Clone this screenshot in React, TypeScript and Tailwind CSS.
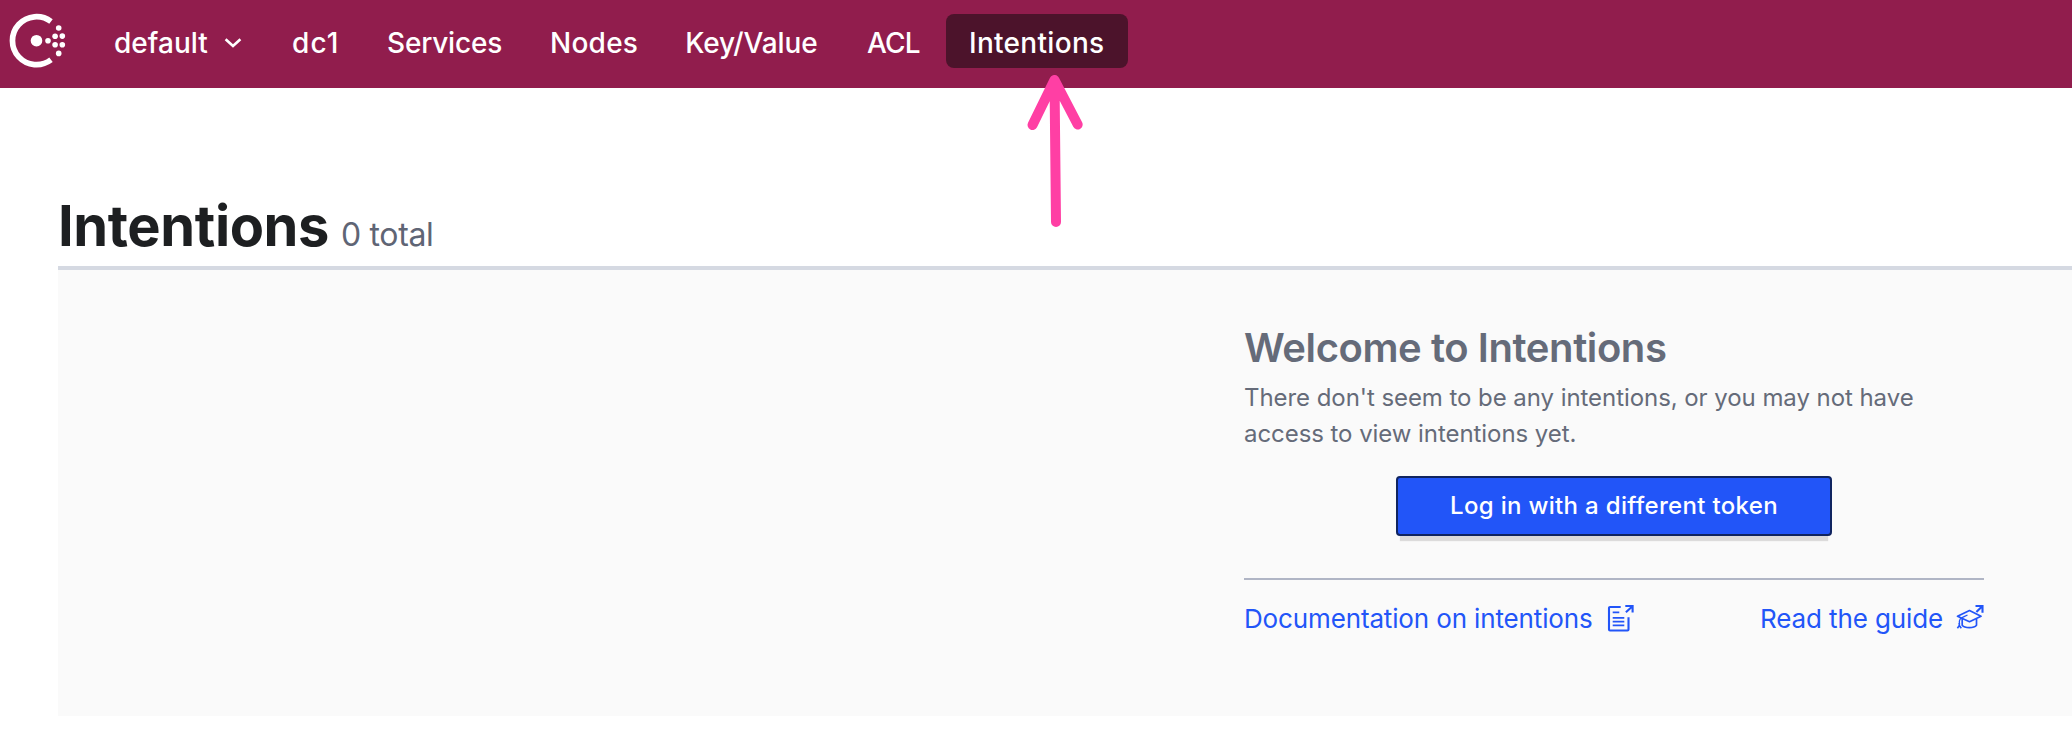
import type { ReactNode } from 'react';

function ConsulLogo() {
  const dots: [number, number][] = [
    [48, 40.7],
    [55.1, 36.3],
    [62.3, 36.1],
    [55.1, 44.8],
    [62.3, 44.8],
    [58.7, 28],
    [58.7, 53.4],
  ];
  return (
    <svg className="h-[88px] w-[70px] shrink-0" viewBox="0 0 70 88" fill="none">
      <path d="M51 21.6A24 24 0 1 0 51 59.8" stroke="#fff" strokeWidth="5.7" />
      <circle cx="36.5" cy="40.7" r="5.8" fill="#fff" />
      {dots.map(([cx, cy]) => (
        <circle key={`${cx}-${cy}`} cx={cx} cy={cy} r="2.8" fill="#fff" />
      ))}
    </svg>
  );
}

function NavItem({ className, children }: { className: string; children: ReactNode }) {
  return (
    <li className={`h-[54px] shrink-0 whitespace-nowrap leading-[58px] ${className}`}>
      <a>{children}</a>
    </li>
  );
}

function DocsIcon() {
  return (
    <svg className="h-7 w-7" viewBox="0 0 28 28" fill="none" stroke="currentColor" strokeWidth="2.1">
      <path d="M14.7 3H4a1 1 0 0 0-1 1v21.5a1 1 0 0 0 1 1h17.5a1 1 0 0 0 1-1V13.3" />
      <path d="M6.7 8.4h6.6M6.7 13.9h11.6M6.7 17.7h11.6M6.7 21.4h11.6" strokeWidth="1.7" />
      <path d="M19.3 2h7.3v6.6M26.2 2.4l-6.3 5.8" />
    </svg>
  );
}

function GuideIcon() {
  return (
    <svg
      className="h-7 w-7"
      viewBox="0 0 28 28"
      fill="none"
      stroke="currentColor"
      strokeWidth="1.7"
      strokeLinejoin="round"
    >
      <path d="M1.5 12.3L13.5 6.6L25 12.3L13.5 17.7Z" />
      <path d="M11.5 11L6.5 13.4C4.4 14.3 3.6 15.2 3.4 17V20" strokeWidth="1.3" />
      <path d="M6.2 15v6.3c2.5 3.2 11.7 3.2 14.3 0V15" />
      <path d="M3.3 19v2.5L1.4 24.2M3.3 21.5l2 2.7" strokeWidth="1.6" />
      <path d="M19.5 2h7v6.8M26.2 2.3l-5.8 5.6" strokeWidth="2.1" strokeLinejoin="miter" />
    </svg>
  );
}

export default function App() {
  return (
    <div className="relative h-[736px] w-[2072px] overflow-hidden bg-white font-['Inter',sans-serif]">
      <header className="flex h-[88px] bg-[#911d4d]">
        <ConsulLogo />
        <ul className="flex pt-[14px] text-[28px] font-[550] text-white">
          <NavItem className="ml-[44px] w-[178px] tracking-[0.03px]">
            <span className="flex">
              <span className="w-[109px]">default</span>
              <svg className="mt-[21px] h-5 w-5" viewBox="0 0 20 20" fill="none">
                <path d="M2.6 4.3L10 11L17.4 4.3" stroke="#fff" strokeWidth="2.6" />
              </svg>
            </span>
          </NavItem>
          <NavItem className="w-[95px] tracking-[1.1px]">dc1</NavItem>
          <NavItem className="w-[163px] tracking-[-0.2px]">Services</NavItem>
          <NavItem className="w-[135.2px] tracking-[0.25px]">Nodes</NavItem>
          <NavItem className="w-[181.8px] tracking-[-0.15px]">Key/Value</NavItem>
          <NavItem className="w-[79px] tracking-[-0.85px]">ACL</NavItem>
          <NavItem className="w-[182px] rounded-lg bg-[#4c132b] pl-[23px] tracking-[0.3px]">
            Intentions
          </NavItem>
        </ul>
      </header>

      <main className="pl-[58px]">
        <div className="flex h-[182px] items-baseline border-b-4 border-[#d5d9e2] pt-[106px]">
          <h1 className="text-[56px] leading-[64px] font-bold tracking-[-0.4px] text-[#1d1f21]">
            Intentions
          </h1>
          <em className="ml-[12px] text-[32px] leading-[40px] tracking-[-0.35px] text-[#5f6575] not-italic">
            0 total
          </em>
        </div>

        <div className="h-[446px] bg-[#fafafa] pt-[54px] pl-[1186px]">
          <section className="w-[740px] text-[#656b79]">
            <h2 className="text-[40px] leading-[48px] font-semibold tracking-[-0.42px]">
              Welcome to Intentions
            </h2>
            <p className="mt-[8px] w-[700px] text-[24px] leading-[36px] tracking-[-0.06px]">
              There don't seem to be any intentions, or you may not have access to view intentions yet.
            </p>
            <button className="mt-[24px] ml-[152px] block h-[60px] w-[436px] rounded-[4px] border-2 border-[#10245f] bg-[#2255f8] text-[24px] leading-[56px] font-[550] tracking-[0.32px] text-white shadow-[0_9px_1px_-4px_#dcdbdb]">
              Log in with a different token
            </button>
            <div className="mt-[42px] flex justify-between border-t-2 border-[#b0b5c5] pt-[22px] text-[26px] text-[#2255f8]">
              <a className="flex h-8 items-center">
                <span className="w-[362px] pt-[2px] leading-8 tracking-[-0.14px]">Documentation on intentions</span>
                <DocsIcon />
              </a>
              <a className="flex h-8 items-center">
                <span className="w-[196px] pt-[2px] leading-8 tracking-[-0.114px]">Read the guide</span>
                <GuideIcon />
              </a>
            </div>
          </section>
        </div>
      </main>

      <svg
        className="absolute top-[70px] left-[1020px] h-[160px] w-[70px]"
        viewBox="0 0 70 160"
        fill="none"
        stroke="#ff3fa4"
        strokeWidth="10"
        strokeLinecap="round"
        strokeLinejoin="round"
      >
        <path d="M36 152L34.5 10M12.5 55L34.5 10L57.7 54.5" />
      </svg>
    </div>
  );
}
